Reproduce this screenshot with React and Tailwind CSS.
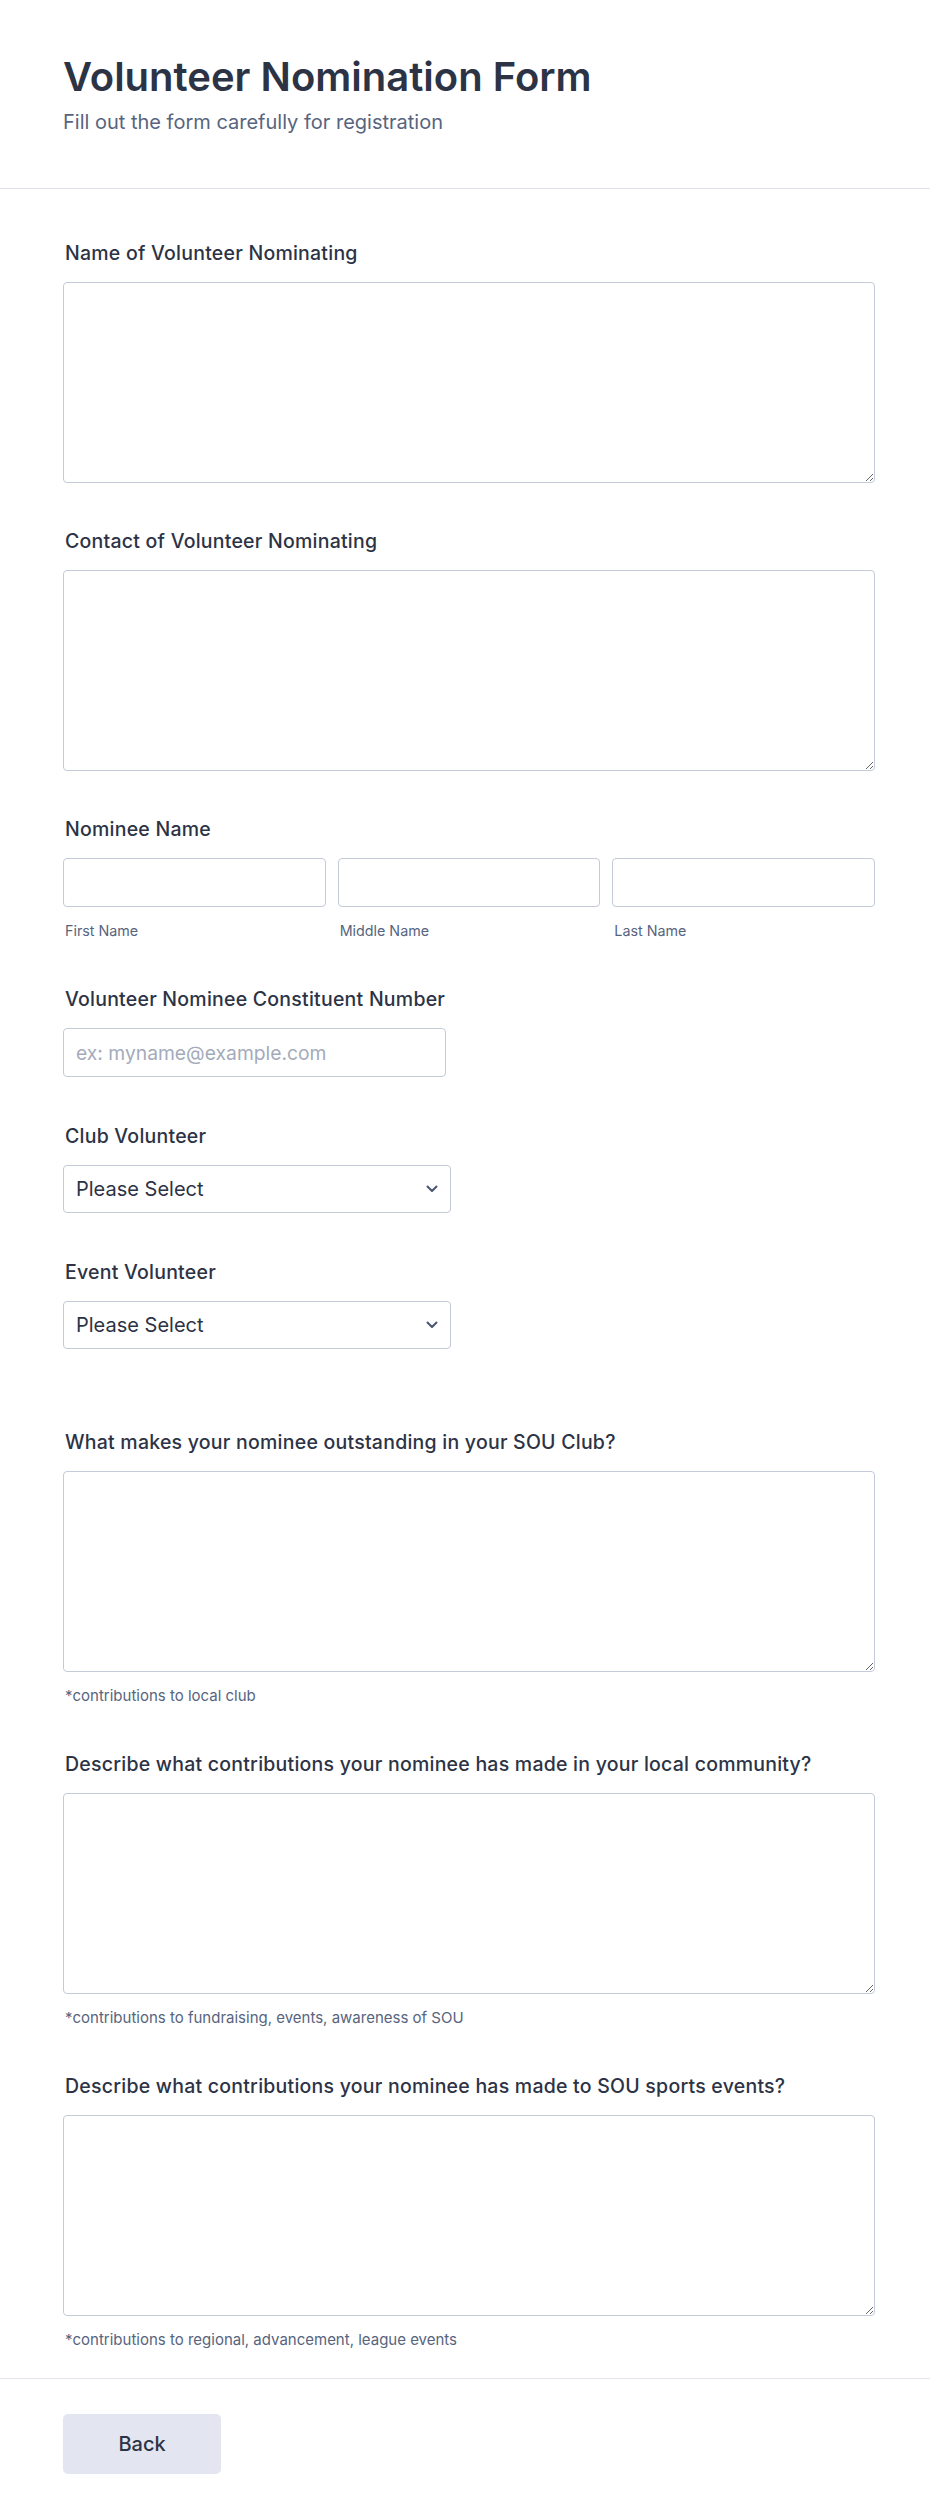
import React from 'react';

function Label({ children }) {
  return (
    <label className="block pl-[2px] text-[19.5px] leading-[28px] font-medium tracking-[0.012em] text-[#2c3345] mb-[15px]">
      {children}
    </label>
  );
}

function Helper({ children }) {
  return <p className="mt-[14px] pl-[2px] text-[15px] leading-[20px] text-[#57647e]">{children}</p>;
}

function Area() {
  return (
    <textarea className="block w-full h-[201px] rounded-[4px] border border-[#c3cad8] bg-white outline-none" />
  );
}

function Chevron() {
  return (
    <svg
      className="pointer-events-none absolute right-[13px] top-1/2 -translate-y-1/2"
      width="12"
      height="8"
      viewBox="0 0 12 8"
      fill="none"
    >
      <path d="M1.5 1.5L6 6L10.5 1.5" stroke="#4a5570" strokeWidth="2" strokeLinecap="round" strokeLinejoin="round" />
    </svg>
  );
}

function SelectBox() {
  return (
    <div className="relative w-[388px]">
      <select className="block w-full h-[48px] appearance-none rounded-[4px] border border-[#c3cad8] bg-white pl-[12px] text-[20px] text-[#2c3345] outline-none">
        <option>Please Select</option>
      </select>
      <Chevron />
    </div>
  );
}

export default function App() {
  const inputCls =
    'block w-full h-[49px] rounded-[4px] border border-[#c3cad8] bg-white px-[12px] text-[19.3px] text-[#2c3345] outline-none placeholder:text-[#a3abbb]';

  return (
    <div className="min-h-screen bg-white font-['Inter',sans-serif] text-[#2c3345]">
      <header className="px-[63px] pt-[53px] pb-[52px] border-b border-[#dfe2e8]">
        <h1 className="text-[40px] leading-[48px] font-semibold text-[#2c3345]">Volunteer Nomination Form</h1>
        <p className="mt-[7px] text-[20px] leading-[28px] text-[#57647e]">Fill out the form carefully for registration</p>
      </header>

      <main className="pl-[63px] pt-[50px] pb-[28px] border-b border-[#e3e6ee]">
        <div className="w-[812px] flex flex-col gap-[44px]">
          <div>
            <Label>Name of Volunteer Nominating</Label>
            <Area />
          </div>

          <div>
            <Label>Contact of Volunteer Nominating</Label>
            <Area />
          </div>

          <div>
            <Label>Nominee Name</Label>
            <div className="grid grid-cols-3 gap-[12px]">
              <div>
                <input className={inputCls} />
                <p className="mt-[14px] pl-[2px] text-[14.3px] leading-[20px] text-[#57647e]">First Name</p>
              </div>
              <div>
                <input className={inputCls} />
                <p className="mt-[14px] pl-[2px] text-[14.3px] leading-[20px] text-[#57647e]">Middle Name</p>
              </div>
              <div>
                <input className={inputCls} />
                <p className="mt-[14px] pl-[2px] text-[14.3px] leading-[20px] text-[#57647e]">Last Name</p>
              </div>
            </div>
          </div>

          <div>
            <Label>Volunteer Nominee Constituent Number</Label>
            <div className="w-[383px]">
              <input className={inputCls + ' h-[48px]'} placeholder="ex: myname@example.com" />
            </div>
          </div>

          <div className="mt-[1px]">
            <Label>Club Volunteer</Label>
            <SelectBox />
          </div>

          <div className="mt-[1px]">
            <Label>Event Volunteer</Label>
            <SelectBox />
          </div>

          <div className="mt-[35px]">
            <Label>What makes your nominee outstanding in your SOU Club?</Label>
            <Area />
            <Helper>*contributions to local club</Helper>
          </div>

          <div>
            <Label>Describe what contributions your nominee has made in your local community?</Label>
            <Area />
            <Helper>*contributions to fundraising, events, awareness of SOU</Helper>
          </div>

          <div>
            <Label>Describe what contributions your nominee has made to SOU sports events?</Label>
            <Area />
            <Helper>*contributions to regional, advancement, league events</Helper>
          </div>
        </div>
      </main>

      <footer className="pl-[63px] pt-[35px] pb-[34px]">
        <button className="w-[158px] h-[60px] rounded-[5px] bg-[#e3e6f1] text-[20px] font-medium text-[#2c3345]">
          Back
        </button>
      </footer>
    </div>
  );
}
